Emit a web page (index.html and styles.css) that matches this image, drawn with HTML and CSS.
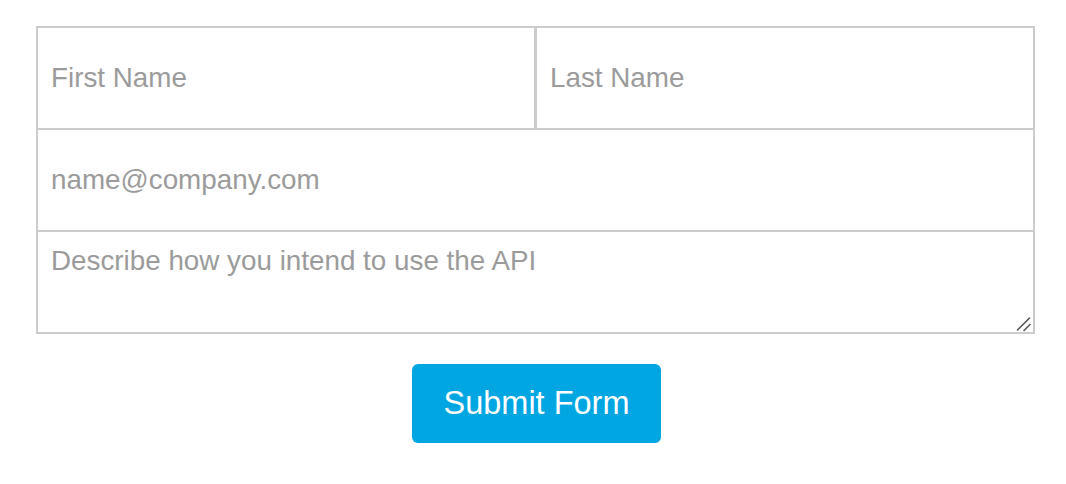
FILE: index.html
```html
<!DOCTYPE html>
<html>
<head>
<meta charset="utf-8">
<link rel="stylesheet" href="styles.css">
</head>
<body>
<form class="form">
  <div class="row">
    <input class="field field-first" type="text" placeholder="First Name">
    <input class="field field-last" type="text" placeholder="Last Name">
  </div>
  <input class="field field-email" type="email" placeholder="name@company.com">
  <div class="desc-wrap">
    <textarea class="field field-desc" placeholder="Describe how you intend to use the API"></textarea>
    <svg class="grip" width="16" height="16" viewBox="0 0 16 16" aria-hidden="true">
      <line x1="1.5" y1="14" x2="13.5" y2="2" stroke="#555" stroke-width="1.6" stroke-linecap="round"/>
      <line x1="8" y1="14.5" x2="14" y2="8.5" stroke="#555" stroke-width="1.6" stroke-linecap="round"/>
    </svg>
  </div>
  <div class="actions">
    <button class="submit" type="button">Submit Form</button>
  </div>
</form>
</body>
</html>
```

FILE: styles.css
```css
html, body {
  margin: 0;
  padding: 0;
  background: #fff;
}

.form {
  margin: 26px 0 0 36px;
  width: 999px;
  font-family: "Liberation Sans", Arial, sans-serif;
}

.row {
  display: flex;
}

.field {
  box-sizing: border-box;
  display: block;
  margin: 0;
  border: 2px solid #cccccc;
  border-radius: 0;
  background: #fff;
  color: #555;
  font-family: "Liberation Sans", Arial, sans-serif;
  font-size: 27.8px;
  padding: 0 13px;
  outline: none;
  -webkit-appearance: none;
  appearance: none;
}

.field::placeholder {
  color: #9b9b9b;
  opacity: 1;
}

.field-first {
  width: 500px;
  height: 104px;
  border-right-width: 2px;
}

.field-last {
  flex: 1;
  min-width: 0;
  height: 104px;
  border-left-width: 1px;
}

.field-email {
  width: 100%;
  height: 102px;
  border-top: 0;
}

.desc-wrap {
  position: relative;
}

.field-desc {
  width: 100%;
  height: 102px;
  border-top: 0;
  padding-top: 13px;
  line-height: 31px;
  resize: none;
}

.grip {
  position: absolute;
  right: 3px;
  bottom: 2px;
  pointer-events: none;
}

.actions {
  display: flex;
  justify-content: center;
  padding-left: 2px;
  margin-top: 30px;
}

.submit {
  display: block;
  width: 249px;
  height: 79px;
  border: 0;
  border-radius: 6px;
  background: #00a6e1;
  color: #fff;
  font-family: "Liberation Sans", Arial, sans-serif;
  font-size: 32.5px;
  cursor: pointer;
}
```
